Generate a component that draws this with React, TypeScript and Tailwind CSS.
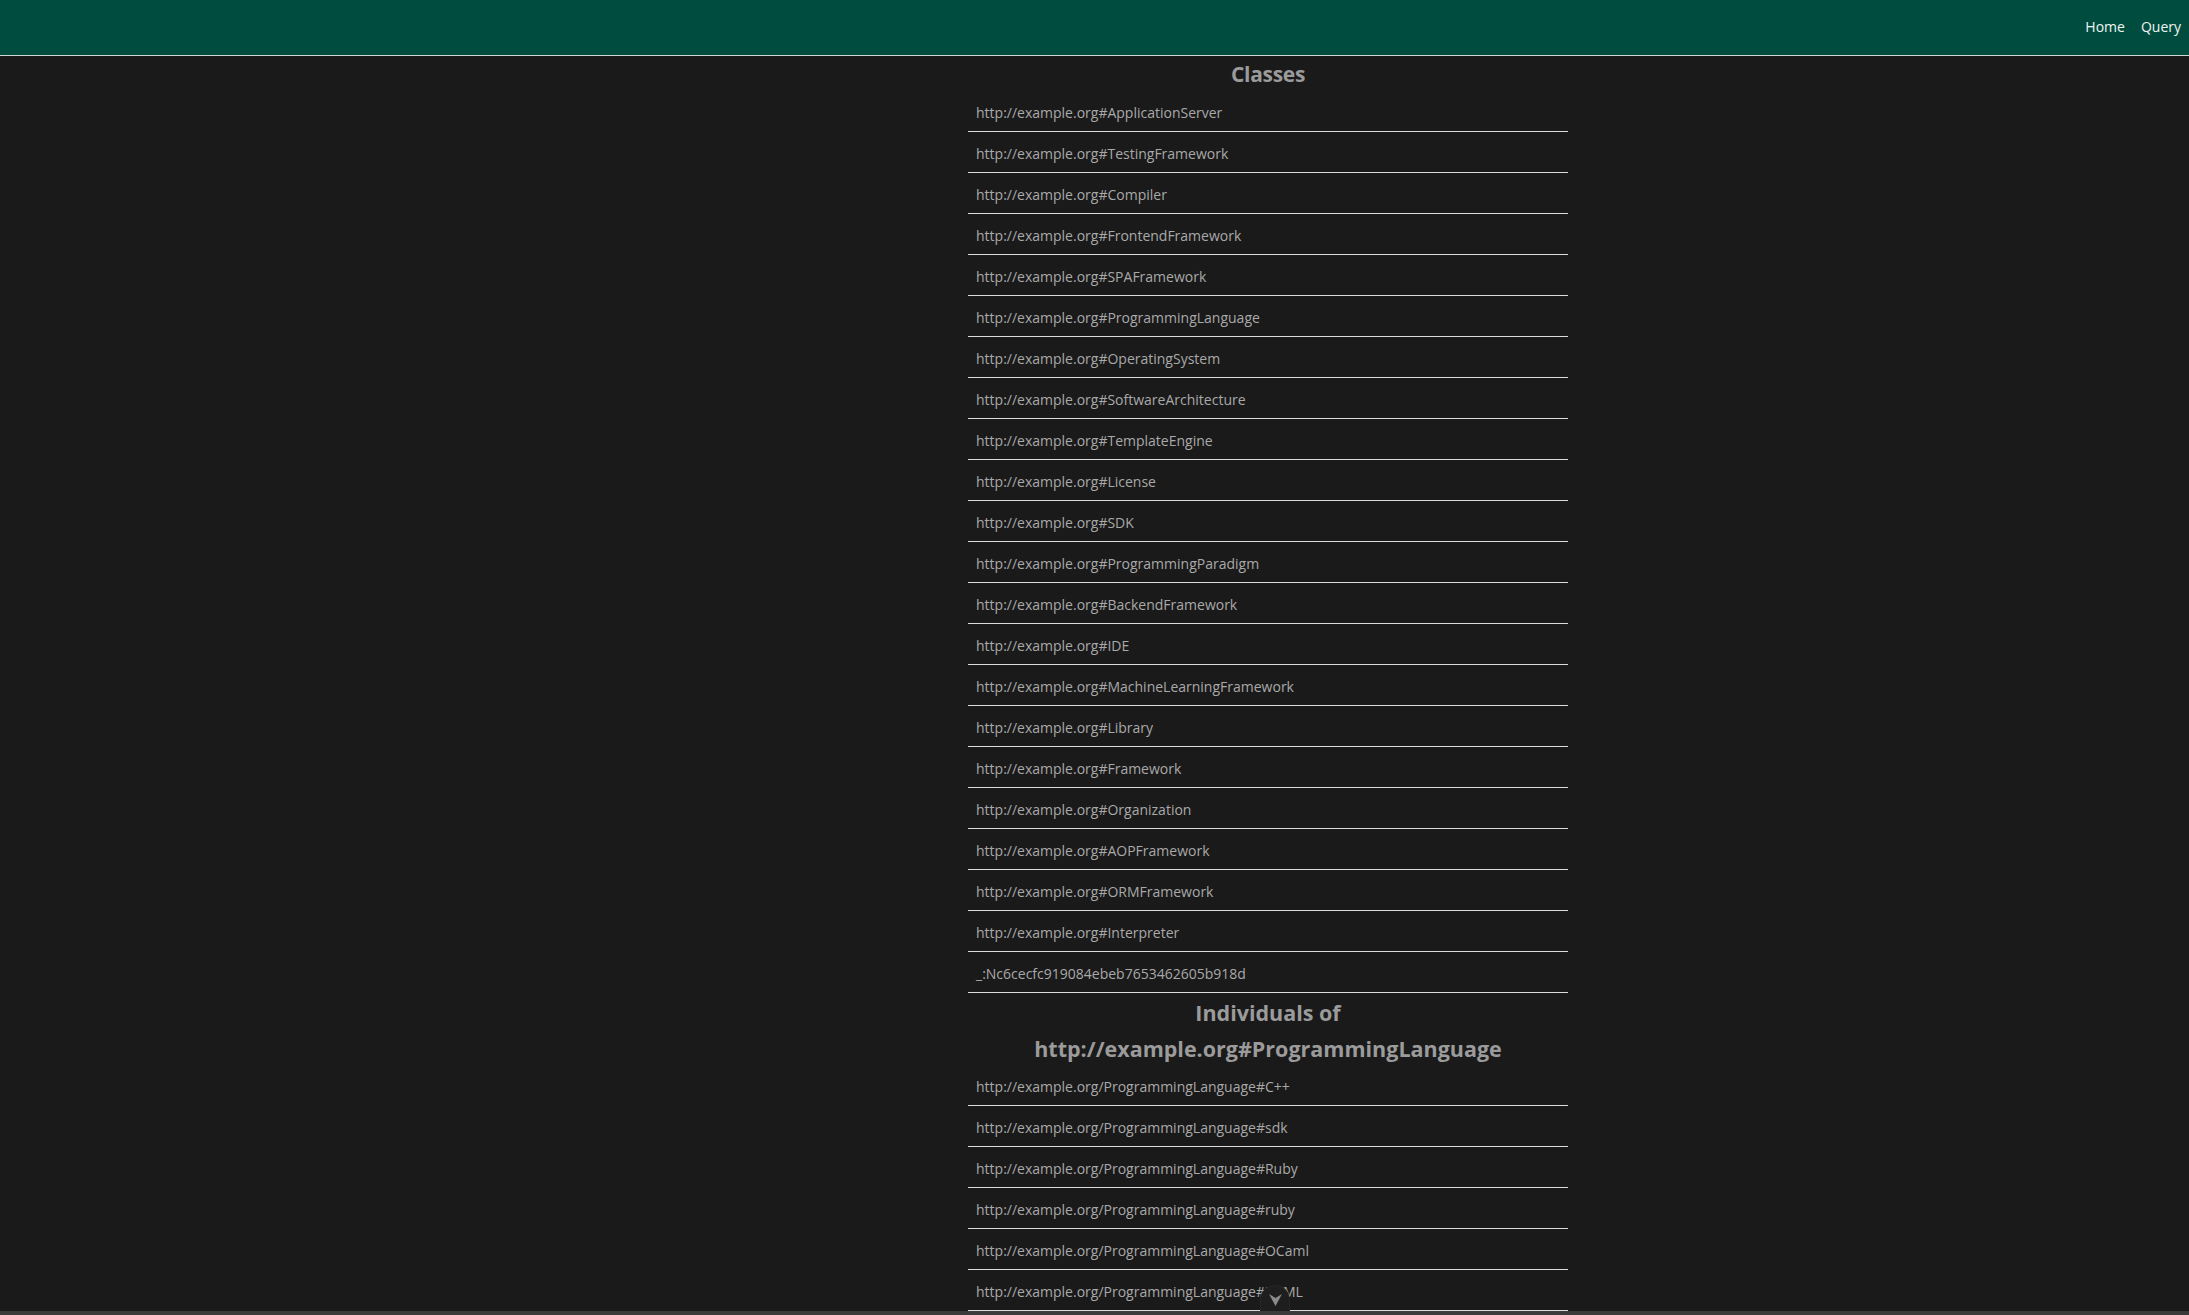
import { FC } from 'react';

const classes = [
  'http://example.org#ApplicationServer',
  'http://example.org#TestingFramework',
  'http://example.org#Compiler',
  'http://example.org#FrontendFramework',
  'http://example.org#SPAFramework',
  'http://example.org#ProgrammingLanguage',
  'http://example.org#OperatingSystem',
  'http://example.org#SoftwareArchitecture',
  'http://example.org#TemplateEngine',
  'http://example.org#License',
  'http://example.org#SDK',
  'http://example.org#ProgrammingParadigm',
  'http://example.org#BackendFramework',
  'http://example.org#IDE',
  'http://example.org#MachineLearningFramework',
  'http://example.org#Library',
  'http://example.org#Framework',
  'http://example.org#Organization',
  'http://example.org#AOPFramework',
  'http://example.org#ORMFramework',
  'http://example.org#Interpreter',
  '_:Nc6cecfc919084ebeb7653462605b918d',
];

const individuals = [
  'http://example.org/ProgrammingLanguage#C++',
  'http://example.org/ProgrammingLanguage#sdk',
  'http://example.org/ProgrammingLanguage#Ruby',
  'http://example.org/ProgrammingLanguage#ruby',
  'http://example.org/ProgrammingLanguage#OCaml',
  'http://example.org/ProgrammingLanguage#HTML',
];

// Single clickable row in a list
const Row: FC<{ label: string }> = ({ label }) => (
  <li className="h-[41px] flex items-center pt-[3px] px-2 border-b border-[#dcdcdc] text-[14px] text-[#a9a9a9] cursor-pointer">
    {label}
  </li>
);

const App: FC = () => {
  return (
    <div
      className="h-screen bg-[#1a1a1a] overflow-hidden"
      style={{ fontFamily: '"Open Sans", "Noto Sans", sans-serif' }}
    >
      {/* Top navigation */}
      <nav className="h-[56px] bg-[#004d40] border-b border-[#cfd8d6] flex items-center justify-end pr-2 pb-[3px]">
        <ul className="flex gap-4 text-[14px] text-[#eef5f2]">
          <li>Home</li>
          <li>Query</li>
        </ul>
      </nav>

      <div className="flex">
        <div className="w-[968px] shrink-0" />
        <main className="w-[600px]">
          <h2 className="h-[35px] leading-[37px] text-center text-[21px] font-bold text-[#9b9b9b] tracking-[-0.3px]">
            Classes
          </h2>
          <ul>
            {classes.map((c) => (
              <Row key={c} label={c} />
            ))}
          </ul>
          <h2 className="leading-[36px] pt-[2px] h-[72px] text-center text-[21.5px] font-bold text-[#9b9b9b]">
            Individuals of
            <br />
            http://example.org#ProgrammingLanguage
          </h2>
          <ul>
            {individuals.map((i) => (
              <Row key={i} label={i} />
            ))}
          </ul>
        </main>
      </div>

      {/* Scroll-down button */}
      <div className="fixed left-[1260px] bottom-[4px] w-[30px] h-[26px] rounded-t-full bg-[#1e1e1e] border border-b-0 border-[#262626] flex items-start justify-center pt-[8px]">
        <svg width="13" height="12" viewBox="0 0 13 12">
          <polygon points="0,0 6.5,4 13,0 6.5,12" fill="#8a8a8a" />
        </svg>
      </div>
      <div className="fixed left-0 right-0 bottom-0 h-[4px] bg-[#3b3b3b]" />
    </div>
  );
};

export default App;
